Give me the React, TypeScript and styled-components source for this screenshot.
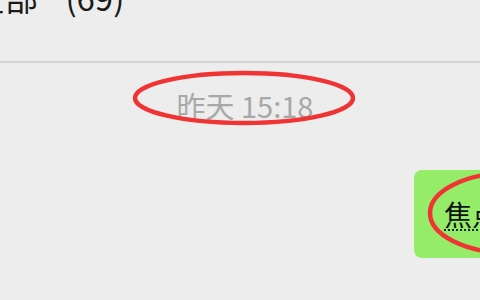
import React from "react";
import styled, { createGlobalStyle } from "styled-components";

const Global = createGlobalStyle`
  html, body { margin: 0; padding: 0; background: #ededed; }
  body { width: 480px; height: 300px; overflow: hidden; font-family: "Noto Sans CJK SC", "Liberation Sans", sans-serif; }
`;

const Page = styled.div`
  width: 480px;
  height: 300px;
  display: flex;
  flex-direction: column;
  background: #ededed;
  overflow: hidden;
  position: relative;
`;

const Header = styled.div`
  height: 61px;
  flex: none;
  border-bottom: 2px solid #d3d3d3;
  display: flex;
  align-items: flex-start;
  overflow: hidden;
`;

const Title = styled.div`
  margin-top: -23px;
  margin-left: -28px;
  font-size: 33px;
  line-height: 40px;
  color: #1a1a1a;
  white-space: nowrap;
  word-spacing: 20px;
`;

const Body = styled.div`
  flex: 1;
  display: flex;
  flex-direction: column;
  padding-top: 22px;
`;

const TimeRow = styled.div`
  display: flex;
  justify-content: center;
  height: 40px;
  align-items: center;
`;

const Time = styled.span`
  font-size: 29px;
  line-height: 40px;
  color: #a8a8a8;
  margin-left: 10px;
`;

const MsgRow = styled.div`
  margin-top: 45px;
  display: flex;
  justify-content: flex-end;
`;

const Bubble = styled.div`
  background: #95ec69;
  border-radius: 8px;
  height: 88px;
  width: 120px;
  margin-right: -54px;
  display: flex;
  align-items: center;
  padding-left: 30px;
  box-sizing: border-box;
`;

const BubbleText = styled.span`
  font-size: 28px;
  line-height: 36px;
  color: #111;
  white-space: nowrap;
  text-decoration: underline dotted #222;
  text-decoration-thickness: 2px;
  text-underline-offset: 3px;
`;

const Mark = styled.svg`
  position: absolute;
  left: 0;
  top: 0;
  pointer-events: none;
  overflow: visible;
`;

export default function App() {
  return (
    <Page>
      <Global />
      <Header>
        <Title>全部 (69)</Title>
      </Header>
      <Body>
        <TimeRow>
          <Time>昨天 15:18</Time>
        </TimeRow>
        <MsgRow>
          <Bubble>
            <BubbleText>焦点</BubbleText>
          </Bubble>
        </MsgRow>
      </Body>
      <Mark width="480" height="300" viewBox="0 0 480 300">
        <ellipse cx="244" cy="98" rx="109" ry="25" fill="none" stroke="#f03434" strokeWidth="4.5" />
        <ellipse cx="510" cy="213" rx="80" ry="40" fill="none" stroke="#f03434" strokeWidth="4.5" />
      </Mark>
    </Page>
  );
}
